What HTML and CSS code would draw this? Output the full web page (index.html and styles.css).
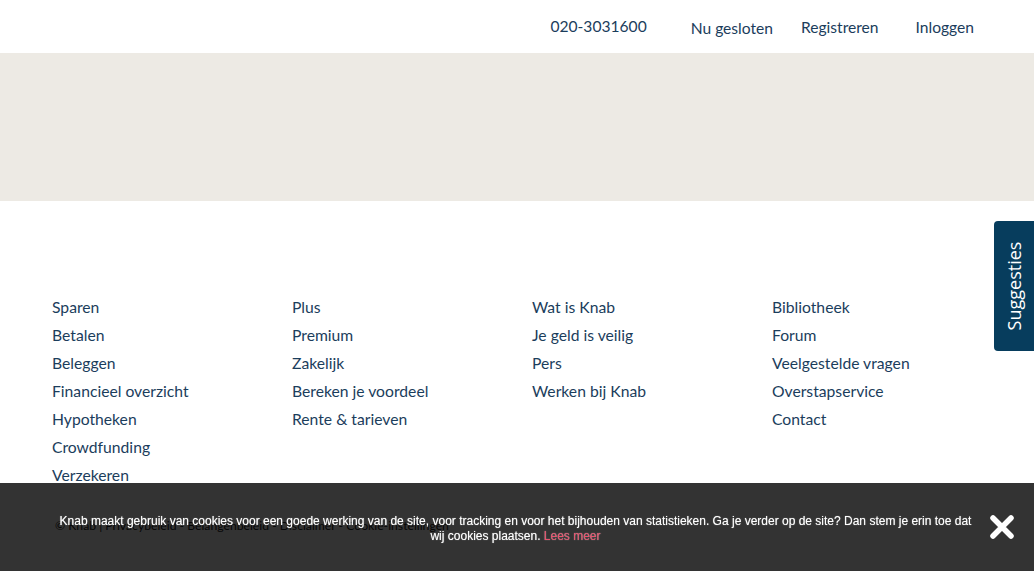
FILE: index.html
```html
<!DOCTYPE html>
<html lang="nl">
<head>
<meta charset="utf-8">
<title>Knab</title>
<link rel="stylesheet" href="styles.css">
</head>
<body>
<header class="topbar">
  <div class="container topbar-inner">
    <a class="top-link phone" href="#">020-3031600</a>
    <span class="top-link status">Nu gesloten</span>
    <a class="top-link register" href="#">Registreren</a>
    <a class="top-link login" href="#">Inloggen</a>
  </div>
</header>
<section class="band"></section>
<footer class="footer">
  <div class="container columns">
    <ul class="col">
      <li><a href="#">Sparen</a></li>
      <li><a href="#">Betalen</a></li>
      <li><a href="#">Beleggen</a></li>
      <li><a href="#">Financieel overzicht</a></li>
      <li><a href="#">Hypotheken</a></li>
      <li><a href="#">Crowdfunding</a></li>
      <li><a href="#">Verzekeren</a></li>
    </ul>
    <ul class="col">
      <li><a href="#">Plus</a></li>
      <li><a href="#">Premium</a></li>
      <li><a href="#">Zakelijk</a></li>
      <li><a href="#">Bereken je voordeel</a></li>
      <li><a href="#">Rente &amp; tarieven</a></li>
    </ul>
    <ul class="col">
      <li><a href="#">Wat is Knab</a></li>
      <li><a href="#">Je geld is veilig</a></li>
      <li><a href="#">Pers</a></li>
      <li><a href="#">Werken bij Knab</a></li>
    </ul>
    <ul class="col">
      <li><a href="#">Bibliotheek</a></li>
      <li><a href="#">Forum</a></li>
      <li><a href="#">Veelgestelde vragen</a></li>
      <li><a href="#">Overstapservice</a></li>
      <li><a href="#">Contact</a></li>
    </ul>
  </div>
  <div class="container legal">© Knab | Privacybeleid - Belangenbeleid - Disclaimer - Cookie-instellingen</div>
</footer>

<a class="suggest" href="#"><span>Suggesties</span></a>

<div class="cookiebar">
  <p class="cookie-text">Knab maakt gebruik van cookies voor een goede werking van de site, voor tracking en voor het bijhouden van statistieken. Ga je verder op de site? Dan stem je erin toe dat wij cookies plaatsen. <a href="#">Lees meer</a></p>
  <button class="cookie-close" aria-label="Sluiten">
    <svg width="26" height="26" viewBox="0 0 26 26"><path d="M4 4 L22 22 M22 4 L4 22" stroke="#fff" stroke-width="5.5" stroke-linecap="round"/></svg>
  </button>
</div>
</body>
</html>
```

FILE: styles.css
```css
* { box-sizing: border-box; }
html, body { margin: 0; padding: 0; }
body {
  font-family: Lato, "Open Sans", sans-serif;
  color: #1b3d5c;
  background: #fff;
  height: 571px;
  overflow: hidden;
}
a { color: inherit; text-decoration: none; }
.container { width: 960px; margin: 0 auto; }

.topbar { height: 53px; background: #fff; }
.topbar-inner {
  display: flex;
  justify-content: flex-end;
  align-items: center;
  height: 53px;
  padding-right: 23px;
  font-size: 15.6px;
}
.top-link { line-height: 20px; }
.phone { padding-bottom: 1px; }
.status { margin-left: 44px; padding-top: 3px; }
.register { margin-left: 28px; }
.login { margin-left: 37px; }

.band { height: 148px; background: #edeae4; }

.footer { padding-top: 92px; }
.columns { display: flex; }
.col {
  list-style: none;
  margin: 0;
  padding: 0 15px;
  width: 240px;
  font-size: 15.7px;
  line-height: 28px;
}
.legal {
  padding: 29px 18px 0;
  font-size: 12.2px;
  line-height: 16px;
  color: #1e1e1e;
}

.suggest {
  position: fixed;
  right: 0;
  top: 221px;
  width: 40px;
  height: 130px;
  background: #073d5d;
  border-radius: 4px 0 0 4px;
  display: flex;
  align-items: center;
  justify-content: center;
}
.suggest span {
  transform: rotate(-90deg);
  color: #fff;
  font-family: "Open Sans", sans-serif;
  font-size: 18px;
  white-space: nowrap;
}

.cookiebar {
  position: fixed;
  left: 0;
  right: 0;
  bottom: 0;
  height: 88px;
  background: rgba(0, 0, 0, 0.8);
  display: flex;
  align-items: center;
  justify-content: center;
}
.cookie-text {
  margin: 4px 0 0 -3px;
  width: 918px;
  text-align: center;
  font-family: "Liberation Sans", Arial, sans-serif;
  font-size: 12px;
  line-height: 15px;
  color: #fff;
  text-shadow: 0 0 1px rgba(255,255,255,0.6);
}
.cookie-text a { color: #e8536e; }
.cookie-close {
  position: absolute;
  right: 19px;
  top: 31px;
  width: 26px;
  height: 26px;
  padding: 0;
  border: 0;
  background: none;
}
.cookie-close svg { display: block; }
```
